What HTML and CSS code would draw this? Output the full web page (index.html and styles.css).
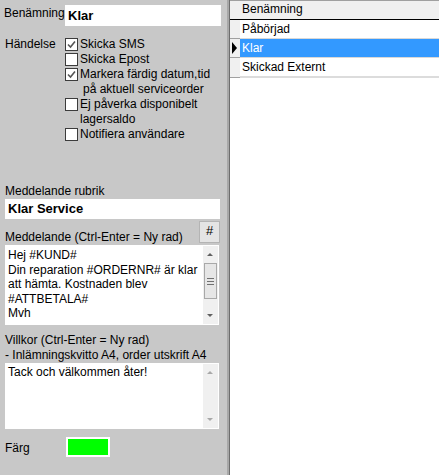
FILE: index.html
```html
<!DOCTYPE html>
<html lang="sv">
<head>
    <meta charset="UTF-8">
    <meta name="viewport" content="width=device-width, initial-scale=1.0">
    <title>Status</title>

    <link rel="stylesheet" href="styles.css">
</head>
<body>
    <div class="window">
        <!-- Vänster panel: redigering av status -->
        <div class="editor">
            <div class="name-row">
                <span class="lbl">Benämning</span>
                <div class="textbox name-box">Klar</div>
            </div>

            <div class="events">
                <span class="lbl">Händelse</span>
                <ul class="checks">
                    <li>
                        <span class="box"><svg viewBox="0 0 11 11" width="11" height="11"><polyline points="2,5.5 4.5,8 9,2.5" /></svg></span>
                        <span>Skicka SMS</span>
                    </li>
                    <li>
                        <span class="box"></span>
                        <span>Skicka Epost</span>
                    </li>
                    <li>
                        <span class="box"><svg viewBox="0 0 11 11" width="11" height="11"><polyline points="2,5.5 4.5,8 9,2.5" /></svg></span>
                        <span>Markera färdig datum,tid<br><span class="indent">på aktuell serviceorder</span></span>
                    </li>
                    <li>
                        <span class="box"></span>
                        <span>Ej påverka disponibelt<br>lagersaldo</span>
                    </li>
                    <li>
                        <span class="box"></span>
                        <span>Notifiera användare</span>
                    </li>
                </ul>
            </div>

            <div class="lbl-line subject-lbl">Meddelande rubrik</div>
            <div class="textbox subject-box">Klar Service</div>

            <div class="msg-head">
                <span class="lbl-line">Meddelande (Ctrl-Enter = Ny rad)</span>
                <span class="hash-btn">#</span>
            </div>
            <div class="memo msg-memo">
                <div class="memo-text">Hej #KUND#<br>Din reparation #ORDERNR# är klar<br>att hämta. Kostnaden blev<br>#ATTBETALA#<br>Mvh</div>
                <div class="scrollbar">
                    <span class="arrow up"></span>
                    <span class="thumb"><i></i><i></i><i></i></span>
                    <span class="track"></span>
                    <span class="arrow down"></span>
                </div>
            </div>

            <div class="terms-lbl">Villkor (Ctrl-Enter = Ny rad)<br>- Inlämningskvitto A4, order utskrift A4</div>
            <div class="memo terms-memo">
                <div class="memo-text">Tack och välkommen åter!</div>
                <div class="scrollbar disabled">
                    <span class="arrow up"></span>
                    <span class="track"></span>
                    <span class="arrow down"></span>
                </div>
            </div>

            <div class="color-row">
                <span class="lbl">Färg</span>
                <span class="swatch"></span>
            </div>
        </div>

        <div class="splitter"></div>

        <!-- Höger panel: lista med statusar -->
        <div class="grid">
            <div class="grid-table">
                <div class="grid-row head">
                    <span class="row-head"></span>
                    <span class="cell">Benämning</span>
                </div>
                <div class="grid-row">
                    <span class="row-head"></span>
                    <span class="cell">Påbörjad</span>
                </div>
                <div class="grid-row selected">
                    <span class="row-head"><span class="marker"></span></span>
                    <span class="cell">Klar</span>
                </div>
                <div class="grid-row last">
                    <span class="row-head"></span>
                    <span class="cell">Skickad Externt</span>
                </div>
            </div>
        </div>
    </div>
</body>
</html>
```

FILE: styles.css
```css
body {
    margin: 0;
    font-family: "Liberation Sans", Arial, sans-serif;
    font-size: 12px;
    color: #000;
}

.window {
    display: flex;
    width: 448px;
    height: 475px;
    overflow: hidden;
}

/* vänster panel */
.editor {
    width: 227px;
    flex: 0 0 227px;
    background-color: #c8c8c8;
    box-sizing: border-box;
}

.lbl {
    flex: 0 0 60px;
    box-sizing: border-box;
    padding-left: 5px;
    line-height: 15px;
}

.textbox {
    background-color: #fff;
    font-weight: bold;
    font-size: 13px;
    box-sizing: border-box;
    padding-left: 3px;
}

.name-row {
    display: flex;
    padding-top: 5px;
}

.name-row .lbl {
    flex-basis: 65px;
    padding-left: 4px;
    padding-top: 1px;
}

.name-box {
    width: 156px;
    height: 21px;
    line-height: 22px;
}

.events {
    display: flex;
    margin-top: 11px;
}

.events .lbl {
    flex-basis: 65px;
}

.checks {
    list-style: none;
    margin: 0;
    padding: 0;
}

.checks li {
    display: flex;
    line-height: 15px;
}

.box {
    flex: 0 0 13px;
    width: 13px;
    height: 13px;
    margin-top: 1px;
    margin-right: 2px;
    box-sizing: border-box;
    border: 1px solid #3c3c3c;
    background-color: #fff;
}

.box svg {
    display: block;
    fill: none;
    stroke: #555;
    stroke-width: 1.6;
}

.indent {
    padding-left: 3px;
}

.lbl-line {
    padding-left: 5px;
    line-height: 14px;
}

.subject-lbl {
    margin-top: 42px;
}

.subject-box {
    margin: 1px 0 0 5px;
    width: 215px;
    height: 20px;
    line-height: 20px;
}

.msg-head {
    display: flex;
    align-items: flex-end;
    justify-content: space-between;
    margin-top: 2px;
    padding-right: 7px;
    height: 23px;
}

.hash-btn {
    width: 21px;
    height: 22px;
    margin-bottom: 1px;
    box-sizing: border-box;
    border: 1px solid #b4b4b4;
    background-color: #e4e4e4;
    text-align: center;
    line-height: 18px;
    font-size: 13px;
}

.memo {
    display: flex;
    margin: 1px 0 0 5px;
    width: 214px;
    box-sizing: border-box;
    padding: 1px;
    background-color: #fff;
}

.memo-text {
    flex: 1;
    padding: 2px 0 0 2px;
    line-height: 14.5px;
    white-space: nowrap;
    overflow: hidden;
}

.msg-memo {
    height: 80px;
}

.terms-memo {
    height: 66px;
    margin-top: 0;
}

.terms-memo .memo-text {
    padding-top: 1px;
}

.scrollbar {
    flex: 0 0 15px;
    display: flex;
    flex-direction: column;
    background-color: #f0f0f0;
}

.arrow {
    position: relative;
    height: 17px;
    flex: 0 0 17px;
}

.arrow::after {
    content: "";
    position: absolute;
    left: 4px;
    top: 7px;
    border-left: 3px solid transparent;
    border-right: 3px solid transparent;
}

.arrow.up::after {
    border-bottom: 3px solid #606060;
}

.arrow.down::after {
    border-top: 3px solid #606060;
}

.disabled .arrow.up::after {
    border-bottom-color: #a8a8a8;
}

.disabled .arrow.down::after {
    border-top-color: #a8a8a8;
}

.thumb {
    flex: 0 0 36px;
    margin: 0 1px;
    box-sizing: border-box;
    border: 1px solid #a8a8a8;
    background-color: #e6e6e6;
    display: flex;
    flex-direction: column;
    justify-content: center;
    align-items: center;
    gap: 2px;
}

.thumb i {
    display: block;
    width: 7px;
    height: 1px;
    background-color: #707070;
}

.track {
    flex: 1;
}

.terms-lbl {
    margin-top: 8px;
    padding-left: 5px;
    line-height: 15px;
}

.color-row {
    display: flex;
    align-items: center;
    margin-top: 8px;
}

.color-row .lbl {
    flex-basis: 66px;
    padding-top: 2px;
}

.swatch {
    width: 44px;
    height: 20px;
    box-sizing: border-box;
    border: 2px solid #fff;
    background-color: #00ff00;
}

/* splitter */
.splitter {
    flex: 0 0 2px;
    background-color: #a8a8a8;
}

/* höger panel */
.grid {
    flex: 1;
    background-color: #fff;
    border-left: 1px solid #6e6e6e;
}

.grid-table {
    width: 209px;
}

.grid-row {
    display: flex;
    height: 19px;
    box-sizing: border-box;
    line-height: 18px;
}

.grid-row .cell {
    flex: 1;
    padding-left: 2px;
    border-bottom: 1px solid #d8d8d8;
}

.row-head {
    flex: 0 0 10px;
    position: relative;
    background-color: #f0f0f0;
    border-bottom: 1px solid #a0a0a0;
    box-sizing: border-box;
}

.grid-row.head {
    height: 20px;
    border-top: 1px solid #a0a0a0;
    background-color: #f0f0f0;
}

.grid-row.head .cell,
.grid-row.head .row-head {
    border-bottom: 1px solid #000;
    line-height: 17px;
}

.grid-row.selected .cell {
    background-color: #3399ff;
    color: #fff;
}

.grid-row.last .cell {
    border-bottom: 2px solid #dcdcdc;
}

.grid-row.last {
    height: 20px;
}

.marker {
    position: absolute;
    left: 2px;
    top: 3px;
    border-left: 5px solid #000;
    border-top: 6px solid transparent;
    border-bottom: 6px solid transparent;
}
```
